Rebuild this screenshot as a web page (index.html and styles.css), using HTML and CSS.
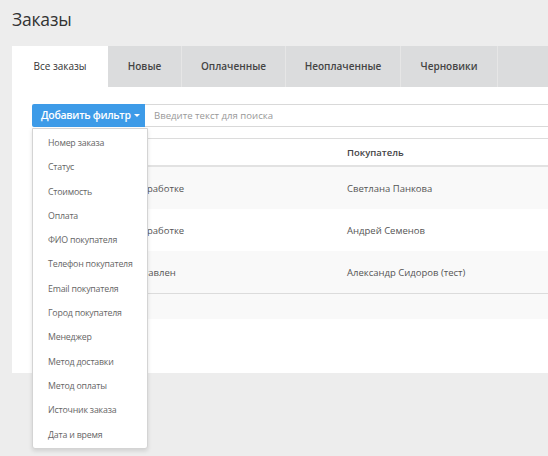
FILE: index.html
```html
<!DOCTYPE html>
<html lang="ru">
<head>
<meta charset="utf-8">
<link rel="stylesheet" href="styles.css">
</head>
<body>
<div class="page">
  <h1 class="title">Заказы</h1>
  <div class="card">
    <div class="tabs">
      <div class="tab active">Все заказы</div>
      <div class="tab t-new">Новые</div>
      <div class="tab t-paid">Оплаченные</div>
      <div class="tab t-unpaid">Неоплаченные</div>
      <div class="tab t-draft">Черновики</div>
      <div class="tab t-rest"></div>
    </div>
    <div class="content">
      <div class="filter">
        <div class="filter-btn">Добавить фильтр <span class="caret"></span></div>
        <div class="search">Введите текст для поиска</div>
        <ul class="dropdown">
          <li>Номер заказа</li>
          <li>Статус</li>
          <li>Стоимость</li>
          <li>Оплата</li>
          <li>ФИО покупателя</li>
          <li>Телефон покупателя</li>
          <li>Email покупателя</li>
          <li>Город покупателя</li>
          <li>Менеджер</li>
          <li>Метод доставки</li>
          <li>Метод оплаты</li>
          <li>Источник заказа</li>
          <li>Дата и время</li>
        </ul>
      </div>
      <div class="table">
        <div class="row head"><div class="c1"></div><div class="c2"></div><div class="c3">Покупатель</div></div>
        <div class="row odd"><div class="c1"></div><div class="c2">В обработке</div><div class="c3">Светлана Панкова</div></div>
        <div class="row"><div class="c1"></div><div class="c2">В обработке</div><div class="c3">Андрей Семенов</div></div>
        <div class="row odd last"><div class="c1"></div><div class="c2">Доставлен</div><div class="c3">Александр Сидоров (тест)</div></div>
        <div class="foot"></div>
      </div>
    </div>
  </div>
</div>
</body>
</html>
```
FILE: styles.css
```css
html, body {
  margin: 0;
  padding: 0;
  background: #ededed;
  overflow: hidden;
}
body {
  font-family: "Open Sans", "Liberation Sans", sans-serif;
  color: #444;
  width: 548px;
  height: 456px;
}
.page {
  padding: 0 0 0 12px;
}
.title {
  margin: 0;
  padding-top: 6px;
  height: 46px;
  box-sizing: border-box;
  font-size: 17.5px;
  font-weight: 400;
  color: #333;
  line-height: 26px;
  letter-spacing: -0.2px;
}
.card {
  background: #fff;
  width: 600px;
  height: 327px;
}
.tabs {
  display: flex;
  height: 41px;
  background: #dbdcdd;
}
.tab {
  height: 41px;
  line-height: 41px;
  text-align: center;
  font-size: 10px;
  font-weight: 600;
  color: #444;
  box-sizing: border-box;
  border-left: 1px solid #e6e6e6;
}
.tab.active {
  background: #fff;
  width: 96px;
  font-weight: 500;
  color: #333;
  border-left: none;
}
.t-new { width: 73px; border-left: none; }
.t-paid { width: 104px; }
.t-unpaid { width: 115px; }
.t-draft { width: 97px; }
.t-rest { flex: 1; }
.content {
  padding: 17px 0 0 20px;
}
.filter {
  position: relative;
  display: flex;
  height: 23px;
}
.filter-btn {
  background: #3d9be8;
  color: #fff;
  font-size: 10.5px;
  font-weight: 600;
  letter-spacing: -0.3px;
  width: 113px;
  box-sizing: border-box;
  padding-left: 9px;
  line-height: 23px;
  white-space: nowrap;
  border-radius: 2px 0 0 2px;
}
.caret {
  display: inline-block;
  width: 0;
  height: 0;
  border-left: 3px solid transparent;
  border-right: 3px solid transparent;
  border-top: 3px solid #fff;
  vertical-align: middle;
  margin-left: 1px;
  margin-top: -2px;
}
.search {
  flex: 1;
  border: 1px solid #d9d9d9;
  border-left: none;
  font-size: 9.6px;
  color: #999;
  line-height: 21px;
  padding-left: 9px;
}
.dropdown {
  position: absolute;
  left: 0;
  top: 24px;
  width: 116px;
  margin: 0;
  padding: 2px 0 1px;
  list-style: none;
  background: #fff;
  border: 1px solid #d4d4d4;
  border-radius: 0 0 3px 3px;
  box-shadow: 0 2px 4px rgba(0,0,0,0.12);
  box-sizing: border-box;
  z-index: 2;
}
.dropdown li {
  height: 24.3px;
  line-height: 24.3px;
  padding-left: 15px;
  font-size: 8.8px;
  letter-spacing: -0.2px;
  color: #666;
  white-space: nowrap;
}
.table {
  margin-top: 11px;
  border-top: 1px solid #dcdcdc;
}
.row {
  display: flex;
  height: 42px;
  align-items: center;
  font-size: 9.5px;
  color: #555;
}
.row.head {
  height: 26px;
  border-bottom: 2px solid #e2e2e2;
  font-weight: 600;
  color: #444;
}
.row.odd { background: #f9f9f9; }
.row.last { border-bottom: 1px solid #dcdcdc; }
.c1 { width: 95px; }
.c2 { width: 220px; }
.c3 { flex: 1; }
.foot {
  height: 25px;
  background: #f9f9f9;
}
```
